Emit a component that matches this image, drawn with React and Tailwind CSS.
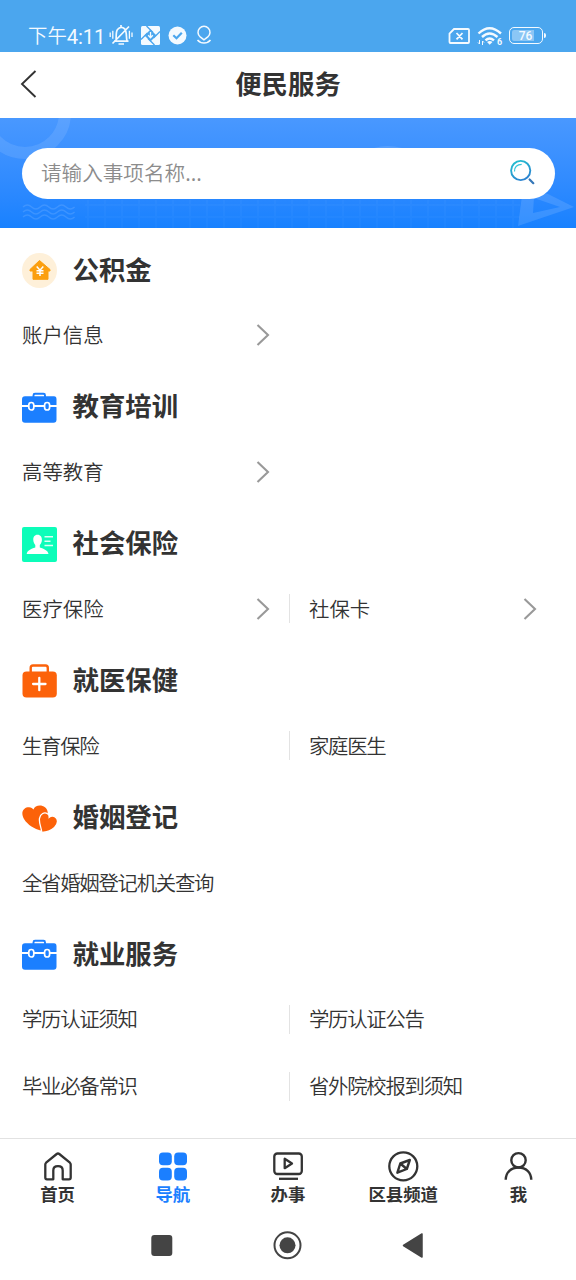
import React from 'react';

const Toolbox = () => (
  <svg className="mt-[2px] h-[35px] w-[35px]" viewBox="0 0 35 35">
    <path d="M11.500 6V4.200Q11.500 2.800 13 2.800H21.500Q23 2.800 23 4.200V6" fill="none" stroke="#1b7fff" strokeWidth="1.900" />
    <path d="M3 5.300H32Q34.500 5.300 34.500 8.500V14H0V8.500Q0 5.300 3 5.300Z" fill="#1b7fff" />
    <path d="M0 16H34.500V28.500Q34.500 31.800 31.500 31.800H3Q0 31.800 0 28.500Z" fill="#1b7fff" />
    <path d="M0 15H34.500" stroke="#fff" strokeWidth="1.700" />
    <rect x="6.800" y="11.500" width="5" height="7.500" rx="2.500" fill="#1b7fff" stroke="#fff" strokeWidth="1.700" />
    <rect x="22.600" y="11.500" width="5" height="7.500" rx="2.500" fill="#1b7fff" stroke="#fff" strokeWidth="1.700" />
  </svg>
);

const Fund = () => (
  <svg className="h-[35px] w-[35px]" viewBox="0 0 35 35">
    <circle cx="17.500" cy="17.500" r="17.500" fill="#fef0d9" />
    <path d="M17.500 7.500L8 16.500V18H11V26.300H26V18H28V16.500Z" fill="#fb9f0f" stroke="#fb9f0f" strokeLinejoin="round" />
    <path d="M14.700 13.500L18 17.200L21.300 13.500M18 17V23M14.500 17.800H21.500M14.500 20.300H21.500" fill="none" stroke="#fff" strokeWidth="1.500" />
  </svg>
);

const Insurance = () => (
  <svg className="h-[35px] w-[35px]" viewBox="0 0 35 35">
    <rect width="35" height="35" rx="2" fill="#0cfdb9" />
    <path d="M15.500 7.700C12.500 7.700 11.100 10 11.300 13C11.400 15 12.200 16.700 13.300 18V20.500C9 22 5.300 23.200 4.700 27H26.500C25.900 23.200 22 22 17.800 20.500V18C19 16.700 19.800 15 19.900 13C20 10 18.500 7.700 15.500 7.700Z" fill="#fff" />
    <path d="M22.500 9.800H31M22.500 14.200H28.500M22.500 18.500H31" stroke="#fff" strokeWidth="1.400" strokeOpacity="0.850" />
  </svg>
);

const Medical = () => (
  <svg className="mt-px h-[35px] w-[35px]" viewBox="0 0 35 35">
    <path d="M8.700 9V4Q8.700 1.500 11 1.500H23.500Q25.800 1.500 25.800 4V9" fill="none" stroke="#fc620a" strokeWidth="2.400" />
    <rect x="0.500" y="7.500" width="34.300" height="26" rx="4" fill="#fc620a" />
    <path d="M17.300 13.800V26.200M11.100 20H23.500" stroke="#fff" strokeWidth="2.300" strokeLinecap="round" />
  </svg>
);

const Hearts = () => (
  <svg className="h-[35px] w-[35px]" viewBox="0 0 35 35">
    <path d="M18.500 29.500C13 28 5.500 24 2 18C-1.500 12 1 7.200 5.500 6.300C8.500 5.700 10.300 6.700 11.500 8.500C12.500 5.500 16.500 3.700 20.500 5C25 6.500 26.200 10 25.700 14L22.500 24C21.500 26 20 28.500 18.500 29.500Z" fill="#fc6209" />
    <path d="M19.800 31.300C19.300 26.500 16.700 21.500 17.500 17.300C18.300 12.500 22.500 10.800 25.500 12.800C27 13.800 27.300 15 27.200 16.300C29 14.700 32.300 14.500 34.300 17C36.300 20 35 24 32.500 26.500C29.500 29.600 25 31 19.800 31.300Z" fill="#fc6209" stroke="#fff" strokeWidth="1.300" />
  </svg>
);

const Chevron = () => (
  <svg className="mt-px h-6 w-[14px]" viewBox="0 0 14 24" fill="none" stroke="#999" strokeWidth="2.100">
    <path d="M1.500 2L12 12L1.500 22" />
  </svg>
);

const sections = [
  { title: '公积金', Icon: Fund, rows: [[{ t: '账户信息', arrow: true }]] },
  { title: '教育培训', Icon: Toolbox, rows: [[{ t: '高等教育', arrow: true }]] },
  { title: '社会保险', Icon: Insurance, rows: [[{ t: '医疗保险', arrow: true }, { t: '社保卡', arrow: true }]] },
  { title: '就医保健', Icon: Medical, rows: [[{ t: '生育保险' }, { t: '家庭医生' }]] },
  { title: '婚姻登记', Icon: Hearts, rows: [[{ t: '全省婚姻登记机关查询' }]] },
  {
    title: '就业服务',
    Icon: Toolbox,
    rows: [
      [{ t: '学历认证须知' }, { t: '学历认证公告' }],
      [{ t: '毕业必备常识' }, { t: '省外院校报到须知' }],
    ],
  },
];

function Cell({ item, second }) {
  return (
    <div className={`flex h-full w-[267px] shrink-0 items-center justify-between pr-[19px] ${second ? 'pl-[20px]' : ''}`}>
      <span className={`-mt-[2px] whitespace-nowrap text-[20.4px] font-[350] leading-[30px] ${item.arrow ? '' : 'tracking-[-1.28px]'}`}>{item.t}</span>
      {item.arrow && <Chevron />}
    </div>
  );
}

function Section({ title, Icon, rows }) {
  return (
    <section>
      <div className="flex h-[70px] items-center gap-[15.500px] pt-[8px]">
        <Icon />
        <h2 className="-mt-[4px] text-[26.4px] font-bold leading-[36px]">{title}</h2>
      </div>
      {rows.map((row, i) => (
        <div key={i} className="flex h-[66.900px] items-center">
          <Cell item={row[0]} />
          {row[1] && (
            <>
              <div className="mr-[-1px] h-[29px] w-px shrink-0 bg-[#e3e3e3]" />
              <Cell item={row[1]} second />
            </>
          )}
        </div>
      ))}
    </section>
  );
}

const tabIcon = 'h-[32px] w-[32px]';
const tabs = [
  {
    label: '首页',
    icon: (
      <svg className={tabIcon} viewBox="0 0 32 32" fill="none" stroke="#333" strokeWidth="2.300" strokeLinejoin="round">
        <path d="M3.300 13.500Q3.300 12.500 4.100 11.700L14.700 3Q16 2 17.300 3L27.900 11.700Q28.700 12.500 28.700 13.500V26.500Q28.700 28.300 27 28.300H20.700V19.500Q20.700 15.200 16 15.200Q11.300 15.200 11.300 19.500V28.300H5Q3.300 28.300 3.300 26.500Z" />
      </svg>
    ),
  },
  {
    label: '导航',
    active: true,
    icon: (
      <svg className={tabIcon} viewBox="0 0 32 32" fill="#1b7fff">
        <rect x="2" y="1.500" width="12.800" height="12.800" rx="4" />
        <rect x="17.200" y="1.500" width="12.800" height="12.800" rx="4" />
        <rect x="2" y="16.700" width="12.800" height="12.800" rx="4" />
        <rect x="17.200" y="16.700" width="12.800" height="12.800" rx="4" />
      </svg>
    ),
  },
  {
    label: '办事',
    icon: (
      <svg className={tabIcon} viewBox="0 0 32 32" fill="none" stroke="#333" strokeWidth="2.300" strokeLinejoin="round">
        <rect x="2.300" y="2.500" width="27.500" height="20.500" rx="3" />
        <path d="M12.700 7.800V17.200L20 12.500Z" />
        <path d="M7 27.800H26" />
      </svg>
    ),
  },
  {
    label: '区县频道',
    icon: (
      <svg className={tabIcon} viewBox="0 0 32 32" fill="none" stroke="#333" strokeWidth="2.300" strokeLinejoin="round">
        <circle cx="16.300" cy="15.300" r="14" />
        <path d="M22.800 9L19.800 18L10.400 21.700L13.300 12.500ZM13.300 12.500L19.800 18" strokeWidth="2.400" />
      </svg>
    ),
  },
  {
    label: '我',
    icon: (
      <svg className={tabIcon} viewBox="0 0 32 32" fill="none" stroke="#333" strokeWidth="2.400">
        <circle cx="16.500" cy="9.300" r="7.200" />
        <path d="M3.700 28.700C3.900 21.200 9 16.500 16.500 16.500S29.100 21.200 29.300 28.700" />
      </svg>
    ),
  },
];

function StatusBar() {
  return (
    <div className="flex h-[52px] items-end bg-[#4ba6ee] pl-[28px] pr-[30px] text-[#f4faff]">
      <div className="mb-px flex h-[28px] w-[80px] items-center whitespace-nowrap font-['Roboto','Noto_Sans_CJK_SC',sans-serif]">
        <span className="text-[19.400px] font-[350]">下午</span>
        <span className="text-[20.300px] tracking-[-0.2px]">4:11</span>
      </div>
      <div className="mb-[4px] flex h-[26px] items-center">
        <svg className="ml-px h-[24px] w-[24px]" viewBox="0 0 24 24" fill="none" stroke="currentColor" strokeWidth="1.700">
          <path d="M5 18.200H19.500M7 18C7.500 15 6.500 9 8.500 6.500Q12 2.500 15.800 6C18 9 17 14 18 18M12 2V4M3.500 20.500L20 3.500M9.500 21H15" />
          <path d="M1.200 9.500V14M3.800 7.800V15.700M20.400 7.800V15.700M23 9.500V14" strokeWidth="1.300" />
        </svg>
        <svg className="ml-[8px] h-[19px] w-[19px]" viewBox="0 0 19 19">
          <rect width="19" height="19" rx="1.500" fill="currentColor" />
          <path d="M9.500 3.500L15.500 9.500L9.500 15.500L3.500 9.500Z" fill="#4ba6ee" />
          <path d="M5.500 0L12 6.500M19 5.500L12.500 12M13.500 19L7 12.500M0 13.500L6.500 7" stroke="#4ba6ee" strokeWidth="1.400" />
          <path d="M9.500 6V11M7.200 9.300L9.500 11.800L11.800 9.300" fill="none" stroke="currentColor" strokeWidth="1.300" />
        </svg>
        <svg className="ml-[8px] h-[19px] w-[19px]" viewBox="0 0 19 19">
          <circle cx="9.500" cy="9.500" r="9" fill="currentColor" />
          <path d="M5.300 9.300L8.500 12.300L13.800 6.700" fill="none" stroke="#4ba6ee" strokeWidth="2.200" />
        </svg>
        <svg className="ml-[9px] h-[20px] w-[16px]" viewBox="0 0 16 20" fill="none" stroke="currentColor" strokeWidth="1.500">
          <path d="M8 14.800L4.200 11.900A6 6 0 1 1 11.800 11.900ZM1.500 15Q4 18 8 18T14.500 15" />
        </svg>
      </div>
      <div className="mb-[3px] ml-auto flex h-[26px] items-center">
        <svg className="mt-[-1px] h-[18px] w-[22px]" viewBox="0 0 22 18" fill="none" stroke="currentColor" strokeWidth="1.800">
          <path d="M6 2H20Q21 2 21 3V15Q21 16 20 16H2.500Q1.500 16 1.500 15V6.500ZM8.500 6L14.500 12.300M14.500 6L8.500 12.300" />
        </svg>
        <svg className="ml-[7px] h-[20px] w-[26px]" viewBox="0 0 26 20" fill="none" stroke="currentColor" strokeWidth="2.400">
          <path d="M1.500 7.500Q12.500 -3 24 7.500M5 11Q12.500 4 20.500 11M8.500 14.300Q12.500 10.500 17 14.300" />
          <path d="M10 16L12.700 18.700L15.500 16Q12.700 14 10 16Z" fill="currentColor" stroke="none" />
          <path d="M2.500 14V18L1 16.500M5.500 19V15L7 16.500" strokeWidth="1" />
          <text x="20" y="19" fill="currentColor" stroke="none" className="font-['Roboto',sans-serif] text-[9px] font-bold">6</text>
        </svg>
        <div className="ml-[6px] mt-[-1px] flex h-[17px] w-[34px] items-center rounded-[5px] border-[1.600px] border-current p-[2px]">
          <div className="flex h-full w-[22px] items-center rounded-l-[2px] bg-[#8bc6f5]">
            <span className="w-[27px] shrink-0 text-center font-['Roboto',sans-serif] text-[12px] font-medium leading-none">76</span>
          </div>
        </div>
        <div className="ml-px mt-[-1px] h-[5px] w-[2px] rounded-r bg-current" />
      </div>
    </div>
  );
}

function Banner() {
  return (
    <div className="relative h-[110px] bg-linear-to-b from-[#4998ff] to-[#1781ff] px-[22px] pt-[30px]">
      <svg className="absolute inset-0 h-full w-full" viewBox="0 0 576 110" fill="none">
        <defs>
          <pattern id="mesh" width="17" height="12" patternUnits="userSpaceOnUse">
            <path d="M0 3H17M3 0V12" stroke="#fff" strokeOpacity="0.025" strokeWidth="2" />
          </pattern>
        </defs>
        <rect x="85" y="82" width="435" height="28" fill="url(#mesh)" />
        <circle cx="25" cy="-5" r="40" stroke="#fff" strokeOpacity="0.100" strokeWidth="12" />
        <path d="M374 30Q387 26 402 30Z" fill="#fff" fillOpacity="0.120" />
        <g stroke="#fff" strokeOpacity="0.120" strokeWidth="1.500">
          <path d="M23 89q4.300-4 8.600 0t8.600 0t8.600 0t8.600 0t8.600 0t8.600 0" />
          <path d="M23 94q4.300-4 8.600 0t8.600 0t8.600 0t8.600 0t8.600 0t8.600 0" />
          <path d="M23 99q4.300-4 8.600 0t8.600 0t8.600 0t8.600 0t8.600 0t8.600 0" />
        </g>
        <path fillRule="evenodd" d="M523 70L518 108L574 89L548 76ZM534 80L560 89L533 95Z" fill="#fff" fillOpacity="0.120" />
      </svg>
      <div className="relative flex h-[51px] w-[533px] items-center justify-between rounded-full bg-white pl-[19px] pr-[18px]">
        <span className="-mt-[4px] text-[20.600px] font-[350] leading-[30px] text-[#8c8c8c]">请输入事项名称...</span>
        <svg className="-mt-px h-[30px] w-[30px]" viewBox="0 0 30 30" fill="none">
          <defs>
            <linearGradient id="lens" x1="8" y1="3" x2="18" y2="24" gradientUnits="userSpaceOnUse">
              <stop stopColor="#22bfd0" />
              <stop offset="1" stopColor="#2c7bd0" />
            </linearGradient>
          </defs>
          <circle cx="13.700" cy="12.500" r="9.600" stroke="url(#lens)" strokeWidth="1.900" />
          <path d="M7.500 13.500C7.200 9 10.200 6.300 14.700 6.300" stroke="#35c5d8" strokeWidth="1.200" />
          <path d="M22.600 21.500L26.300 25.200" stroke="#3577b8" strokeWidth="2.200" strokeLinecap="round" />
        </svg>
      </div>
    </div>
  );
}

export default function App() {
  return (
    <div className="flex h-[1280px] w-[576px] flex-col overflow-hidden bg-white font-['Noto_Sans_CJK_SC',sans-serif] text-[#333]">
      <StatusBar />
      <header className="grid h-[66px] shrink-0 grid-cols-[60px_1fr_60px] items-center">
        <svg className="-mt-[2px] ml-[20px] h-[30px] w-[18px]" viewBox="0 0 18 30" fill="none" stroke="#333" strokeWidth="1.900">
          <path d="M15.500 2L2 15L15.500 28" />
        </svg>
        <h1 className="-mt-[5px] text-center text-[26.400px] font-bold leading-[36px]">便民服务</h1>
      </header>
      <Banner />
      <main className="flex-1 px-[22px] pt-[3.500px]">
        {sections.map((s) => (
          <Section key={s.title} {...s} />
        ))}
      </main>
      <nav className="grid h-[72px] shrink-0 grid-cols-5 border-t border-[#e2e2e2] pt-[12px]">
        {tabs.map((t) => (
          <div key={t.label} className="flex flex-col items-center">
            {t.icon}
            <span className={`-mt-[1px] text-[17.400px] font-bold leading-[24px] ${t.active ? 'text-[#1b7fff]' : ''}`}>{t.label}</span>
          </div>
        ))}
      </nav>
      <div className="flex h-[70px] shrink-0 items-center justify-center">
        <svg className="h-[30px] w-[274px]" viewBox="0 0 274 30" fill="#444">
          <rect x="0.300" y="5" width="21" height="21" rx="3" />
          <circle cx="136.500" cy="15.300" r="13" fill="none" stroke="#444" strokeWidth="2" />
          <circle cx="136.500" cy="15.300" r="8" />
          <path d="M252.500 15.500L271 4V27Z" stroke="#444" strokeWidth="1.500" strokeLinejoin="round" />
        </svg>
      </div>
    </div>
  );
}
